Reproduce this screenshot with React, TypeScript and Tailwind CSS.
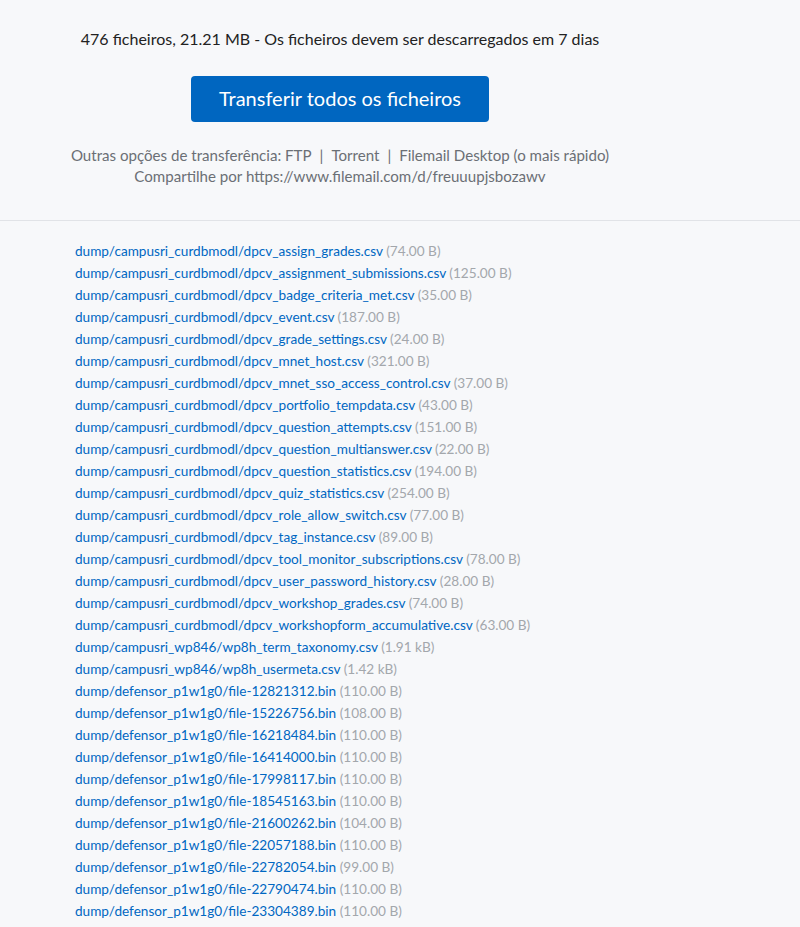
import React from "react";

const files: [string, string][] = [
  ["dump/campusri_curdbmodl/dpcv_assign_grades.csv", "74.00 B"],
  ["dump/campusri_curdbmodl/dpcv_assignment_submissions.csv", "125.00 B"],
  ["dump/campusri_curdbmodl/dpcv_badge_criteria_met.csv", "35.00 B"],
  ["dump/campusri_curdbmodl/dpcv_event.csv", "187.00 B"],
  ["dump/campusri_curdbmodl/dpcv_grade_settings.csv", "24.00 B"],
  ["dump/campusri_curdbmodl/dpcv_mnet_host.csv", "321.00 B"],
  ["dump/campusri_curdbmodl/dpcv_mnet_sso_access_control.csv", "37.00 B"],
  ["dump/campusri_curdbmodl/dpcv_portfolio_tempdata.csv", "43.00 B"],
  ["dump/campusri_curdbmodl/dpcv_question_attempts.csv", "151.00 B"],
  ["dump/campusri_curdbmodl/dpcv_question_multianswer.csv", "22.00 B"],
  ["dump/campusri_curdbmodl/dpcv_question_statistics.csv", "194.00 B"],
  ["dump/campusri_curdbmodl/dpcv_quiz_statistics.csv", "254.00 B"],
  ["dump/campusri_curdbmodl/dpcv_role_allow_switch.csv", "77.00 B"],
  ["dump/campusri_curdbmodl/dpcv_tag_instance.csv", "89.00 B"],
  ["dump/campusri_curdbmodl/dpcv_tool_monitor_subscriptions.csv", "78.00 B"],
  ["dump/campusri_curdbmodl/dpcv_user_password_history.csv", "28.00 B"],
  ["dump/campusri_curdbmodl/dpcv_workshop_grades.csv", "74.00 B"],
  ["dump/campusri_curdbmodl/dpcv_workshopform_accumulative.csv", "63.00 B"],
  ["dump/campusri_wp846/wp8h_term_taxonomy.csv", "1.91 kB"],
  ["dump/campusri_wp846/wp8h_usermeta.csv", "1.42 kB"],
  ["dump/defensor_p1w1g0/file-12821312.bin", "110.00 B"],
  ["dump/defensor_p1w1g0/file-15226756.bin", "108.00 B"],
  ["dump/defensor_p1w1g0/file-16218484.bin", "110.00 B"],
  ["dump/defensor_p1w1g0/file-16414000.bin", "110.00 B"],
  ["dump/defensor_p1w1g0/file-17998117.bin", "110.00 B"],
  ["dump/defensor_p1w1g0/file-18545163.bin", "110.00 B"],
  ["dump/defensor_p1w1g0/file-21600262.bin", "104.00 B"],
  ["dump/defensor_p1w1g0/file-22057188.bin", "110.00 B"],
  ["dump/defensor_p1w1g0/file-22782054.bin", "99.00 B"],
  ["dump/defensor_p1w1g0/file-22790474.bin", "110.00 B"],
  ["dump/defensor_p1w1g0/file-23304389.bin", "110.00 B"],
];

export default function App() {
  return (
    <div
      className="min-h-[927px] w-[800px] bg-[#f7f8fa]"
      style={{ fontFamily: "Lato, 'Open Sans', sans-serif" }}
    >
      <div className="flex w-[680px] flex-col items-center pt-[27px] pb-[33px]">
        <div className="text-[16px] leading-[24px] text-[#222]">
          476 ficheiros, 21.21 MB - Os ficheiros devem ser descarregados em 7 dias
        </div>
        <button className="mt-[25px] flex h-[46px] w-[298px] items-center justify-center rounded-[4px] bg-[#0066c0] pb-[3px] text-[20px] text-white">
          Transferir todos os ficheiros
        </button>
        <div className="mt-[23px] flex flex-col items-center text-[15.1px] leading-[21px] text-[#6b6f75]">
          <div className="flex">
            <span>Outras opções de transferência: FTP</span>
            <span className="mx-[8px]">|</span>
            <span>Torrent</span>
            <span className="mx-[8px]">|</span>
            <span>Filemail Desktop (o mais rápido)</span>
          </div>
          <div>Compartilhe por https://www.filemail.com/d/freuuupjsbozawv</div>
        </div>
      </div>
      <div className="h-px w-full bg-[#e1e3e7]" />
      <div className="flex flex-col pl-[75px] pt-[19px] pb-4">
        {files.map(([name, size]) => (
          <div key={name} className="text-[13.6px] leading-[22px]">
            <span className="text-[#0067c2]">{name}</span>{" "}
            <span className="text-[#a3a7ac]">({size})</span>
          </div>
        ))}
      </div>
    </div>
  );
}
